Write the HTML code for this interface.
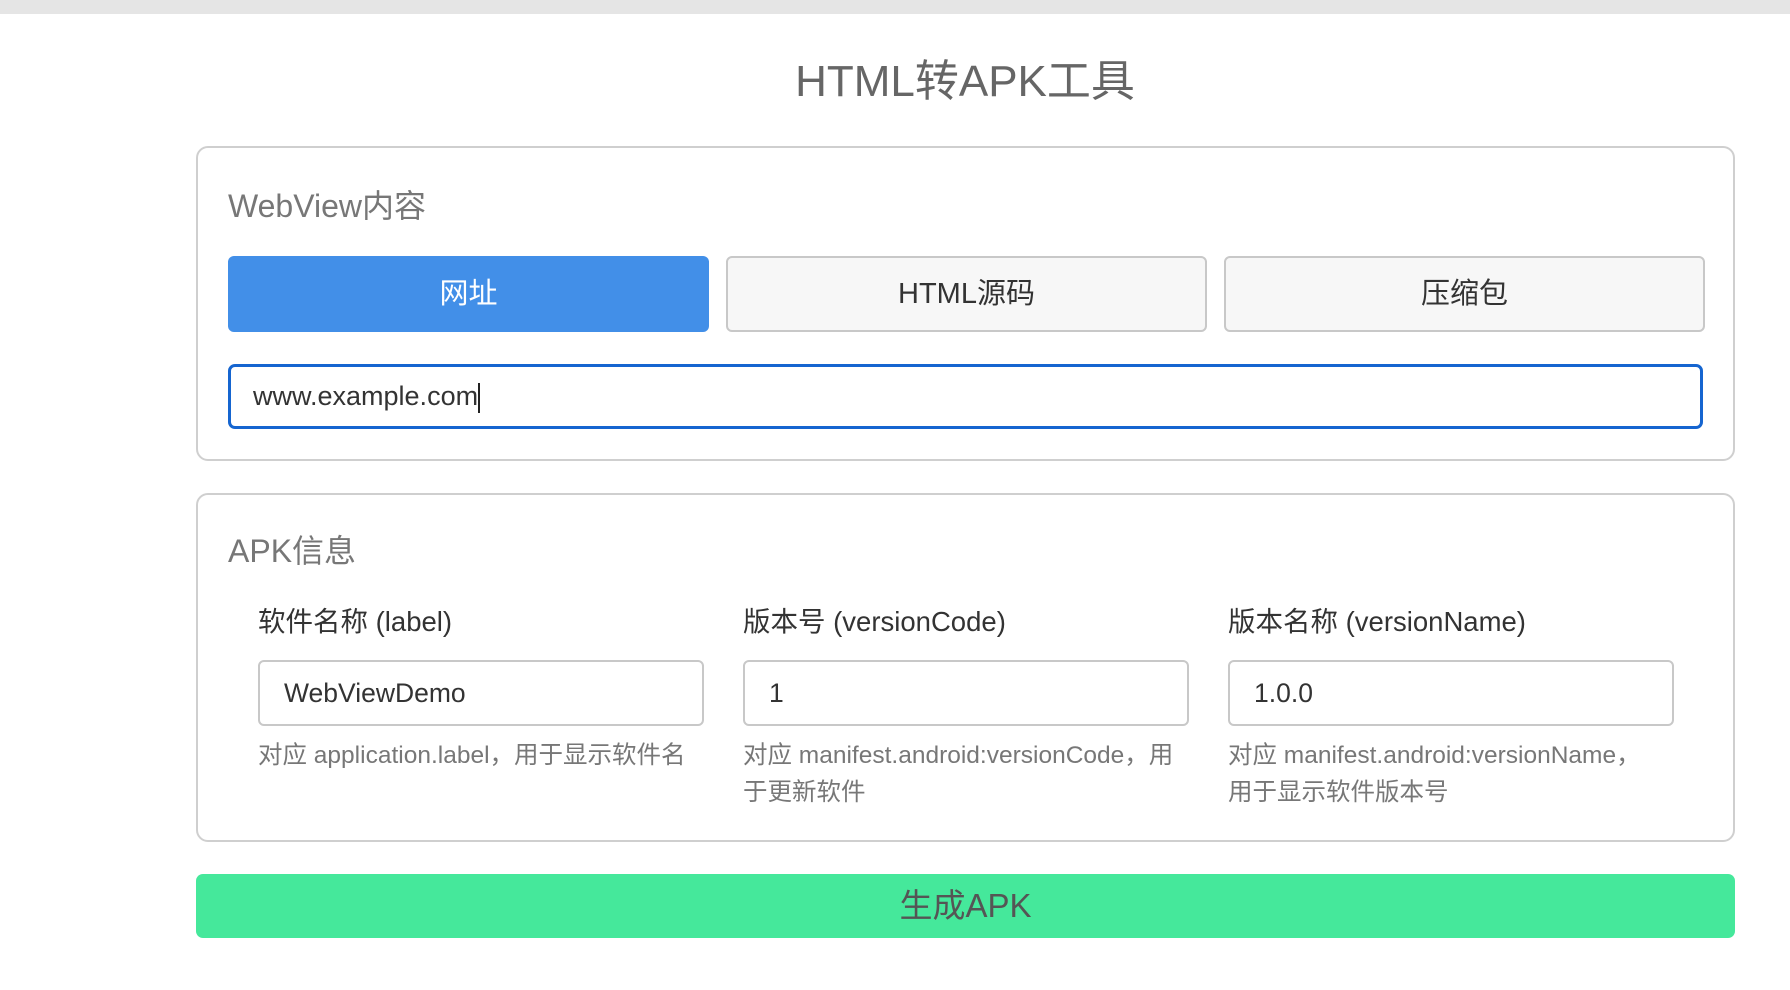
<!DOCTYPE html>
<html><head><meta charset="utf-8"><style>
*{box-sizing:border-box;margin:0;padding:0}
body{width:1790px;height:990px;background:#fff;position:relative;overflow:hidden;font-family:"Liberation Sans","Noto Sans CJK SC",sans-serif}
.a{position:absolute}
.bar{left:0;top:0;width:1790px;height:14px;background:#e5e5e5}
.title{left:0;width:1930px;top:52px;text-align:center;font-size:44px;color:#666;line-height:60px}
.card{left:196px;width:1539px;border:2px solid #cfcfcf;border-radius:12px;background:#fff}
.h{font-size:32px;color:#777;line-height:40px}
.btn{top:256px;height:76px;width:481px;border-radius:6px;font-size:29px;line-height:76px;text-align:center}
.b1{left:228px;background:#428fe8;color:#fff}
.b2{background:#f7f7f7;border:2px solid #c8c8c8;color:#333;line-height:72px}
.inp{border:2px solid #c8c8c8;border-radius:6px;height:66px;font-size:26.5px;color:#333;line-height:62px;padding-left:24px;top:660px;width:446px}
.lab{top:604px;font-size:27.5px;color:#333;line-height:36px}
.hint{top:737px;font-size:24.5px;color:#777;line-height:37px;width:450px}
.nw{white-space:nowrap}
</style></head><body>
<div class="a bar"></div>
<div class="a title">HTML转APK工具</div>
<div class="a card" style="top:146px;height:315px"></div>
<div class="a h" style="left:228px;top:186px">WebView内容</div>
<div class="a btn b1">网址</div>
<div class="a btn b2" style="left:726px">HTML源码</div>
<div class="a btn b2" style="left:1224px">压缩包</div>
<div class="a" style="left:228px;top:364px;width:1475px;height:65px;border:3px solid #1565d0;border-radius:7px;font-size:27px;color:#333;line-height:59px;padding-left:22px">www.example.com<span style="display:inline-block;width:2px;height:30px;background:#222;vertical-align:middle"></span></div>
<div class="a card" style="top:493px;height:349px"></div>
<div class="a h" style="left:228px;top:531px">APK信息</div>
<div class="a lab" style="left:258px">软件名称 (label)</div>
<div class="a lab" style="left:743px">版本号 (versionCode)</div>
<div class="a lab" style="left:1228px">版本名称 (versionName)</div>
<div class="a inp" style="left:258px">WebViewDemo</div>
<div class="a inp" style="left:743px">1</div>
<div class="a inp" style="left:1228px">1.0.0</div>
<div class="a hint" style="left:258px">对应 application.label，用于显示软件名</div>
<div class="a hint nw" style="left:743px">对应 manifest.android:versionCode，用<br>于更新软件</div>
<div class="a hint nw" style="left:1228px">对应 manifest.android:versionName，<br>用于显示软件版本号</div>
<div class="a" style="left:196px;top:874px;width:1539px;height:64px;background:#45e89b;border-radius:7px;text-align:center;font-size:33px;line-height:64px;color:#555">生成APK</div>
</body></html>
